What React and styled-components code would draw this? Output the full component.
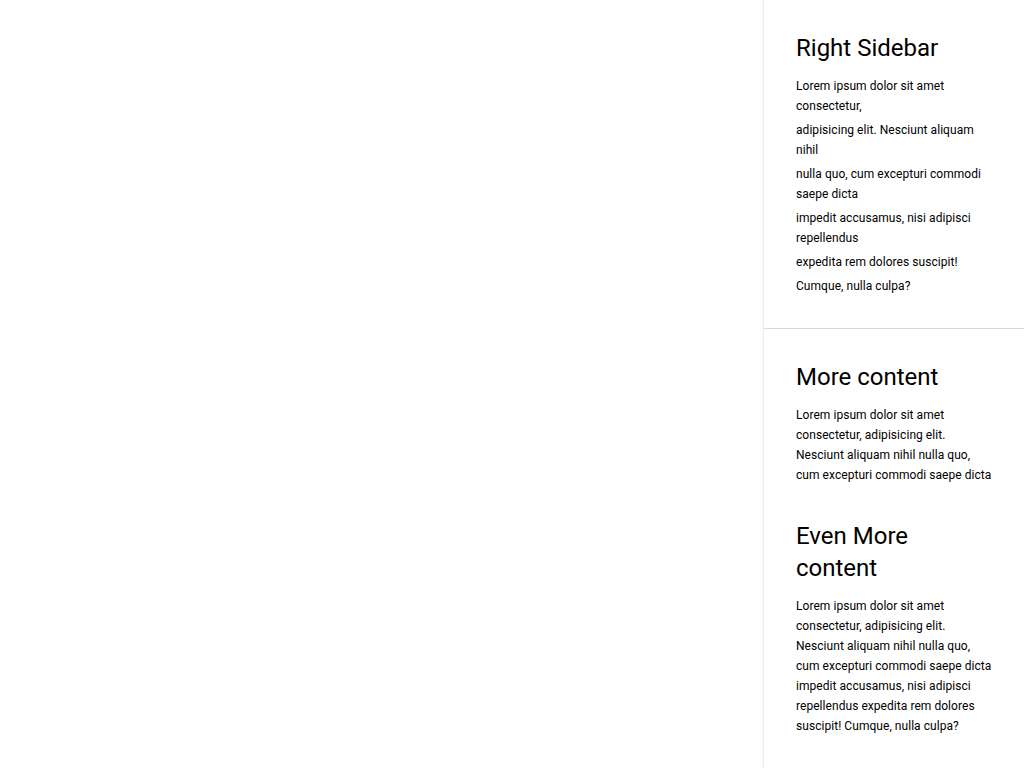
import React from 'react'
import styled, { createGlobalStyle } from 'styled-components'

const GlobalStyle = createGlobalStyle`
  html, body {
    margin: 0;
    padding: 0;
    background: #fff;
  }
  body {
    font-family: Roboto, "Liberation Sans", Arial, sans-serif;
    color: #000;
  }
`

const Page = styled.div`
  display: flex;
  flex-direction: row;
  min-height: 100vh;
`

const Main = styled.main`
  flex: 1;
`

const Sidebar = styled.aside`
  width: 260px;
  flex-shrink: 0;
  border-left: 1px solid #ececec;
  box-shadow: -1px 0 2px rgba(0, 0, 0, 0.03);
  display: flex;
  flex-direction: column;
`

const Section = styled.section`
  padding: 32px;
  display: flex;
  flex-direction: column;
  gap: 35px;
  & + & {
    border-top: 1px solid #d8d8d8;
  }
`

const Block = styled.div`
  display: flex;
  flex-direction: column;
`

const Heading = styled.h2`
  margin: 0 0 12px 0;
  font-size: 24px;
  line-height: 32px;
  font-weight: 400;
  color: #000;
`

const Text = styled.p`
  margin: 0 0 4px 0;
  font-size: 12px;
  line-height: 20px;
  letter-spacing: 0.05px;
  color: #000;
  &:last-child {
    margin-bottom: 0;
  }
`

const lines = [
  'Lorem ipsum dolor sit amet consectetur,',
  'adipisicing elit. Nesciunt aliquam nihil',
  'nulla quo, cum excepturi commodi saepe dicta',
  'impedit accusamus, nisi adipisci repellendus',
  'expedita rem dolores suscipit!',
  'Cumque, nulla culpa?',
]

const App = () => {
  return (
    <>
      <GlobalStyle />
      <Page>
        <Main />
        <Sidebar>
          <Section>
            <Block>
              <Heading>Right Sidebar</Heading>
              {lines.map((l, i) => <Text key={i}>{l}</Text>)}
            </Block>
          </Section>
          <Section>
            <Block>
              <Heading>More content</Heading>
              <Text>
                Lorem ipsum dolor sit amet consectetur, adipisicing elit. Nesciunt aliquam nihil nulla quo, cum excepturi commodi saepe dicta
              </Text>
            </Block>
            <Block>
              <Heading>Even More content</Heading>
              <Text>
                Lorem ipsum dolor sit amet consectetur, adipisicing elit. Nesciunt aliquam nihil nulla quo, cum excepturi commodi saepe dicta impedit accusamus, nisi adipisci repellendus expedita rem dolores suscipit! Cumque, nulla culpa?
              </Text>
            </Block>
          </Section>
        </Sidebar>
      </Page>
    </>
  )
}

export default App
